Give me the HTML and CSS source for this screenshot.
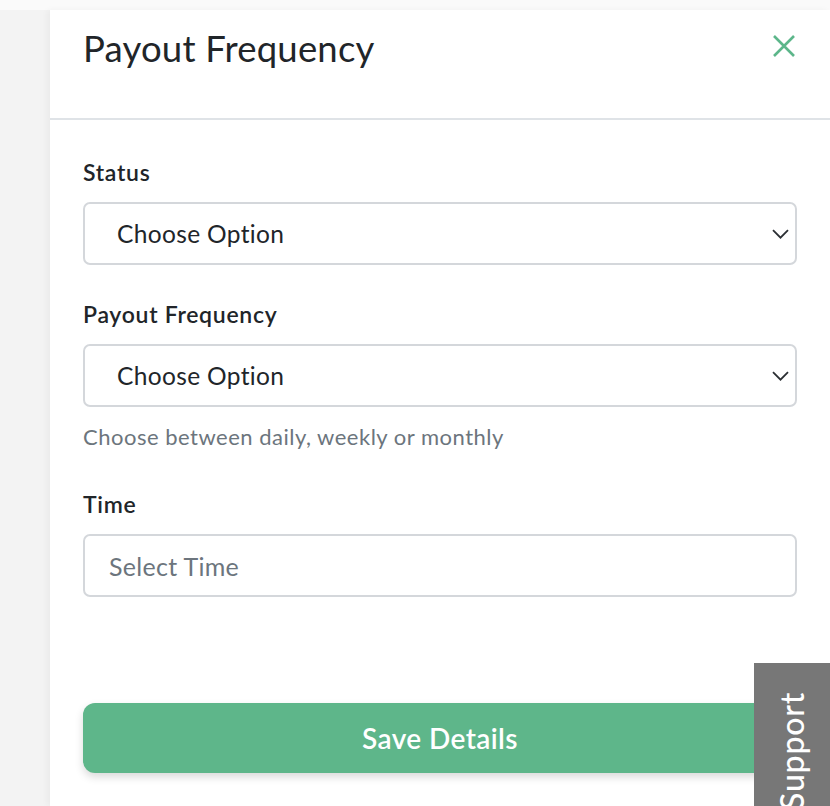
FILE: index.html
```html
<!DOCTYPE html>
<html>
<head>
<meta charset="utf-8">
<link rel="stylesheet" href="styles.css">
</head>
<body>
<div class="page">
  <div class="backdrop"></div>
  <div class="panel">
    <div class="panel-header">
      <h1 class="title">Payout Frequency</h1>
      <button class="close" aria-label="Close">
        <svg width="22" height="22" viewBox="0 0 22 22"><path d="M1 1L21 21M21 1L1 21" stroke="#5cb68a" stroke-width="2.6" fill="none"/></svg>
      </button>
    </div>
    <div class="panel-body">
      <div class="field">
        <div class="label">Status</div>
        <div class="select">
          <span class="select-text">Choose Option</span>
          <svg class="chev" width="17" height="10" viewBox="0 0 17 10"><path d="M1 1.2L8.5 8.7L16 1.2" stroke="#2b2f33" stroke-width="1.8" fill="none"/></svg>
        </div>
      </div>
      <div class="field">
        <div class="label">Payout Frequency</div>
        <div class="select">
          <span class="select-text">Choose Option</span>
          <svg class="chev" width="17" height="10" viewBox="0 0 17 10"><path d="M1 1.2L8.5 8.7L16 1.2" stroke="#2b2f33" stroke-width="1.8" fill="none"/></svg>
        </div>
        <div class="help">Choose between daily, weekly or monthly</div>
      </div>
      <div class="field">
        <div class="label">Time</div>
        <div class="input"><span class="placeholder">Select Time</span></div>
      </div>
      <button class="save">Save Details</button>
    </div>
  </div>
  <div class="support"><span>Support</span></div>
</div>
</body>
</html>
```
FILE: styles.css
```css
html, body {
  margin: 0;
  padding: 0;
  height: 100%;
  overflow: hidden;
}
body {
  font-family: "Lato", "Open Sans", sans-serif;
  background: #fafafa;
}
.page {
  display: flex;
  height: 806px;
  padding-top: 10px;
  box-sizing: border-box;
  position: relative;
}
.backdrop {
  width: 50px;
  flex: none;
  background: #f3f3f3;
}
.panel {
  flex: 1;
  background: #fff;
  box-shadow: -3px 0 6px rgba(0,0,0,0.04);
}
.panel-header {
  height: 108px;
  border-bottom: 2px solid #dfe3e7;
  display: flex;
  align-items: flex-start;
  justify-content: space-between;
  padding: 0 33px;
}
.title {
  margin: 16px 0 0 0;
  font-size: 36.5px;
  font-weight: 400;
  color: #212529;
  line-height: 44px;
  letter-spacing: 0.2px;
}
.close {
  background: none;
  border: 0;
  padding: 0;
  margin: 25px 2px 0 0;
  width: 22px;
  height: 22px;
  cursor: pointer;
}
.close svg { display: block; }
.panel-body {
  padding: 38px 33px 0 33px;
}
.field {
  margin-bottom: 35px;
}
.field:last-of-type {
  margin-bottom: 0;
}
.label {
  font-size: 23px;
  font-weight: 600;
  color: #212529;
  line-height: 28px;
  margin-bottom: 16px;
  letter-spacing: 0.7px;
}
.select, .input {
  height: 63px;
  box-sizing: border-box;
  border: 2px solid #d4d7db;
  border-radius: 7px;
  display: flex;
  align-items: center;
  justify-content: space-between;
  padding: 0 6px 0 32px;
}
.select-text {
  font-size: 24.5px;
  color: #212529;
  letter-spacing: 0.35px;
}
.chev { display: block; }
.help {
  margin-top: 16px;
  margin-bottom: 39px;
  font-size: 22px;
  color: #6c757d;
  line-height: 28px;
  letter-spacing: 0.5px;
}
.input {
  padding-left: 24px;
}
.placeholder {
  font-size: 25px;
  color: #6c757d;
  letter-spacing: 0.3px;
}
.save {
  display: block;
  width: 100%;
  height: 70px;
  margin-top: 106px;
  background: #5eb68a;
  border: 0;
  border-radius: 12px;
  color: #fff;
  font-family: inherit;
  font-size: 28px;
  font-weight: 600;
  letter-spacing: 0.4px;
  box-shadow: 0 4px 8px rgba(0,0,0,0.15);
}
.support {
  position: absolute;
  right: 0;
  top: 663px;
  width: 76px;
  height: 160px;
  background: #777777;
  display: flex;
  justify-content: center;
  padding-top: 29px;
  box-sizing: border-box;
}
.support span {
  writing-mode: vertical-rl;
  transform: rotate(180deg);
  color: #fff;
  font-size: 32px;
  font-weight: 500;
  letter-spacing: 0.8px;
  align-self: flex-start;
  white-space: nowrap;
  height: 131px;
  text-align: right;
  line-height: 1;
}
```
